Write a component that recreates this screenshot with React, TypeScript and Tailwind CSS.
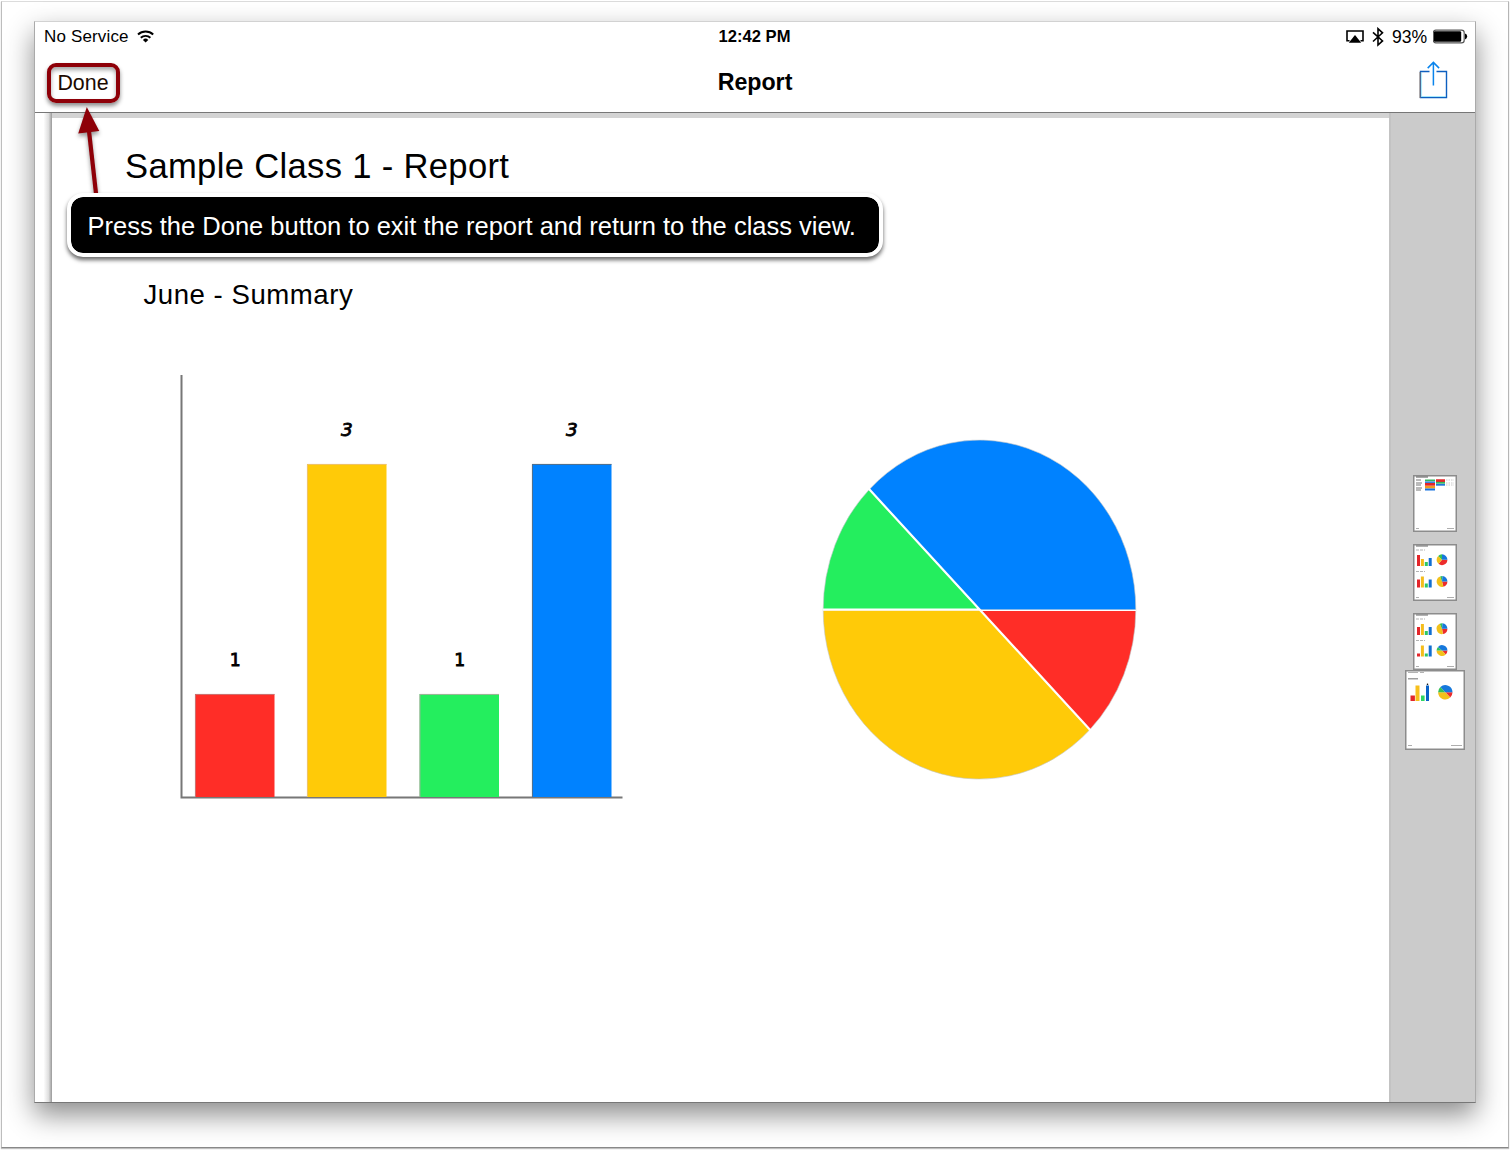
const RED = "#ff2d27";
const YELLOW = "#ffca08";
const GREEN = "#24ee5e";
const BLUE = "#0082ff";

const bars = [
    {x: 15, top: 320, value: 1, color: RED, edge: "#b98a8a"},
    {x: 127, top: 90, value: 3, color: YELLOW, edge: "#e8c08a"},
    {x: 239.5, top: 320, value: 1, color: GREEN, edge: "#c7a2ac"},
    {x: 352, top: 90, value: 3, color: BLUE, edge: "#6f6a66"},
];

const StatusBar = () => (
    <div className="grid h-[30px] grid-cols-3 pt-[5px] text-[17px] leading-[20px]">
        <div className="flex gap-[8px] pl-[9px]">
            <span className="tracking-[0.15px]">No Service</span>
            <svg width="18" height="14" viewBox="0 0 18 14" className="mt-[3px]" aria-hidden="true">
                <path d="M1 4.4A11.2 11.2 0 0 1 16.2 4.4" fill="none" stroke="#000" strokeWidth="2"/>
                <path d="M3.8 7.8A7 7 0 0 1 13.4 7.8" fill="none" stroke="#000" strokeWidth="1.9"/>
                <path d="M8.6 12.6L5.9 9.9A3.8 3.8 0 0 1 11.3 9.9Z"/>
            </svg>
        </div>
        <div className="-ml-px text-center text-[16.6px] font-bold">12:42 PM</div>
        <div className="flex justify-end pr-[7px]">
            <svg width="18" height="14" viewBox="0 0 18 14" className="mt-[3px]" aria-hidden="true">
                <path d="M3.5 10.7H1V1H17V10.7H14.5" fill="none" stroke="#000" strokeWidth="1.6"/>
                <path d="M9 5L15.2 12.8H2.8Z"/>
            </svg>
            <svg width="12" height="20" viewBox="0 0 12 20" className="ml-[8px]" aria-hidden="true">
                <path d="M1 5.4L10.5 13.9L6 18V1.7L10.5 5.8L1 14.5" fill="none" stroke="#000" strokeWidth="1.6"/>
            </svg>
            <span className="ml-[8px] w-[36px] text-[17.6px]">93%</span>
            <svg width="35" height="15" viewBox="0 0 35 15" className="ml-[5px] mt-[2px]" aria-hidden="true">
                <rect x="0.2" y="1.2" width="31" height="12.6" rx="2.6" fill="#fff" stroke="#555" strokeWidth="1.2"/>
                <rect x="0.8" y="2.2" width="27.4" height="10.6" rx="1.2"/>
                <path d="M32 4.6Q34.2 5.2 34.2 7.5T32 10.4Z"/>
            </svg>
        </div>
    </div>
);

const NavBar = () => (
    <div className="grid h-[60px] grid-cols-3 items-start">
        <div className="pl-[12px] pt-[11px]">
            <button
                className="flex h-[40px] w-[73px] items-center justify-center rounded-[9px] border-4 border-[#8e0008] text-[21.4px] leading-[24px] text-[#1c0a00] shadow-[0_3px_4px_rgba(0,0,0,0.45),inset_0_3px_4px_rgba(0,0,0,0.35)]">
                <span className="-mt-px -ml-px">Done</span>
            </button>
        </div>
        <h1 className="pt-[18px] text-center text-[23.2px] leading-[24px] font-bold">Report</h1>
        <div className="flex justify-end pr-[27px] pt-[9px]">
            <svg width="29" height="40" viewBox="0 0 29 40" fill="none" aria-label="Share">
                <path d="M10.5 10.5H1.5V36.5H27.5V10.5H17.5" stroke="#0d5fc0" strokeWidth="1.4"/>
                <path d="M2.6 11.6V35.5H26.4" stroke="#9cecff" strokeWidth="0.8"/>
                <path d="M1 11V37" stroke="#8b7466" strokeWidth="1"/>
                <path d="M14.4 24.5V1.5M8.7 7.1L14.4 1.4L20.1 7.1" stroke="#0a84ec" strokeWidth="1.5"/>
            </svg>
        </div>
    </div>
);

const BarChart = () => (
    <svg width="444" height="426" viewBox="0 0 444 426">
        <path d="M1.5 1V423.5H442.5" fill="none" stroke="#777" strokeWidth="2"/>
        {bars.map((bar) => (
            <g key={bar.x}>
                <rect x={bar.x} y={bar.top} width="79.5" height={423 - bar.top} fill={bar.color}/>
                <path d={`M${bar.x + 0.4} 423V${bar.top + 0.4}H${bar.x + 79.5}`} fill="none" stroke={bar.edge}
                      strokeWidth="0.8"/>
                <text
                    x={bar.x + 40}
                    y={bar.top - 28}
                    textAnchor="middle"
                    className={bar.value === 3
                        ? "font-['DejaVu_Sans'] text-[18.5px] italic stroke-black stroke-[0.8px]"
                        : "font-['DejaVu_Sans_Mono'] text-[18px] stroke-black stroke-[0.8px]"}
                >
                    {bar.value}
                </text>
            </g>
        ))}
    </svg>
);

const PieChart = () => (
    <svg width="316" height="344" viewBox="0 0 316 344">
        <g stroke="#bfc4c8" strokeWidth="0.6">
            <path d="M157.5 172L47.3 51.4A156.3 169.5 0 0 1 313.8 172Z" fill={BLUE}/>
            <path d="M157.5 172H1.2A156.3 169.5 0 0 1 47.3 51.4Z" fill={GREEN}/>
            <path d="M157.5 172H313.8A156.3 169.5 0 0 1 267.9 291.6Z" fill={RED}/>
            <path d="M157.5 172L267.9 291.6A156.3 169.3 0 0 1 1.2 172Z" fill={YELLOW}/>
        </g>
        <path d="M1 171.6H157.5M46.6 50.6L268.4 292.2" stroke="#fff" strokeWidth="2.2"/>
        <path d="M157.5 172.4H314" stroke="#fff" strokeWidth="1.4"/>
    </svg>
);

const MiniBars = ({x, y, heights}) => (
    <g>
        {heights.map((h, i) => (
            <rect key={i} x={x + i * 3.9} y={y - h} width="3" height={h} fill={["#e3262a", "#f4bd1c", "#2fc763", "#116fd2"][i]}/>
        ))}
    </g>
);

// Slice angles are in degrees, clockwise from the right
const MiniPie = ({x, y, r, cuts}) => (
    <g>
        {cuts.map((from, i) => {
            const to = i === cuts.length - 1 ? 360 : cuts[i + 1];
            const point = (deg) => `${x + r * Math.cos(deg * Math.PI / 180)} ${y + r * Math.sin(deg * Math.PI / 180)}`;
            return (
                <path
                    key={i}
                    d={`M${x} ${y}L${point(from)}A${r} ${r} 0 ${to - from > 180 ? 1 : 0} 1 ${point(to)}Z`}
                    fill={["#ec2c2c", "#f2c11a", "#32c058", "#1678dc"][i]}
                />
            );
        })}
    </g>
);

const TableThumb = () => (
    <svg width="44" height="57" viewBox="0 0 44 57">
        <rect x="0.75" y="0.75" width="42.5" height="55.5" fill="#fff" stroke="#8c8c8c" strokeWidth="1.5"/>
        <path d="M3 2H15" stroke="#555" strokeWidth="1"/>
        <path d="M3 5H8M3 8H9M3 10H8M3 13H9M3 15H8" stroke="#777" strokeWidth="1"/>
        <path d="M12 5.4H22" stroke="#36b65c" strokeWidth="1.8"/>
        <path d="M12 7.2H22" stroke="#2377d8" strokeWidth="1.4"/>
        <path d="M12 9.4H22M23 5.6H32" stroke="#e3262a" strokeWidth="2.6"/>
        <path d="M23 7.8H32" stroke="#36b65c" strokeWidth="1.8"/>
        <path d="M23 9.8H32" stroke="#2377d8" strokeWidth="1.8"/>
        <path d="M12 12.2H22" stroke="#f39a20" strokeWidth="2.6"/>
        <path d="M12 14.5H22" stroke="#1672e0" strokeWidth="2"/>
        <path d="M33 5H41M33 8H41M33 10H41" stroke="#bbb" strokeWidth="0.8" strokeDasharray="1.5 1"/>
        <path d="M3 53.5H6M34 53.5H41" stroke="#999" strokeWidth="0.8"/>
    </svg>
);

const ChartThumb = ({first, second, firstCuts, secondCuts}) => (
    <svg width="44" height="57" viewBox="0 0 44 57">
        <rect x="0.75" y="0.75" width="42.5" height="55.5" fill="#fff" stroke="#8c8c8c" strokeWidth="1.5"/>
        <path d="M3 2H15" stroke="#666" strokeWidth="1"/>
        <path d="M3 6H12M3 27.5H12" stroke="#aaa" strokeWidth="0.9" strokeDasharray="3 1"/>
        <MiniBars x={4} y={22} heights={first}/>
        <MiniPie x={29} y={15.7} r={5.4} cuts={firstCuts}/>
        <MiniBars x={4} y={43.5} heights={second}/>
        <MiniPie x={29} y={37.5} r={5.4} cuts={secondCuts}/>
        <path d="M3 53.5H6M34 53.5H41" stroke="#999" strokeWidth="0.8"/>
    </svg>
);

const CurrentThumb = () => (
    <svg width="60" height="80" viewBox="0 0 60 80">
        <rect x="0.75" y="0.75" width="58.5" height="78.5" fill="#fff" stroke="#8c8c8c" strokeWidth="1.5"/>
        <path d="M3 2.5H13M15 2.5H19" stroke="#aaa" strokeWidth="0.9"/>
        <path d="M3 8.8H13" stroke="#888" strokeWidth="1.2"/>
        <rect x="5.5" y="25.5" width="4.4" height="5.5" fill="#e3262a"/>
        <rect x="10.5" y="15.5" width="4" height="15.5" fill="#f7c01c"/>
        <rect x="16" y="25.5" width="3.6" height="5.5" fill="#2fd763"/>
        <rect x="21" y="15.5" width="3" height="15.5" fill="#0a62c8"/>
        <circle cx="22.5" cy="14.2" r="0.8"/>
        <MiniPie x={40.3} y={22.3} r={7.2} cuts={[0, 47, 180, 227]}/>
        <path d="M3 75.5H7M46 75.5H57" stroke="#999" strokeWidth="0.8"/>
    </svg>
);

const PageRail = () => (
    <div
        className="flex w-[86px] flex-col items-center border-l-2 border-[#c3c3c3] bg-[#cbcbcb] pt-[362px] pl-[4px]">
        <TableThumb/>
        <div className="mt-[12px]">
            <ChartThumb first={[11, 7, 4, 8]} second={[8, 11, 4, 8]} firstCuts={[0, 130, 225, 270]}
                        secondCuts={[0, 75, 250, 275]}/>
        </div>
        <div className="mt-[12px]">
            <ChartThumb first={[8, 11, 4, 8]} second={[3, 11, 3, 11]} firstCuts={[0, 80, 245, 275]}
                        secondCuts={[0, 47, 180, 222]}/>
        </div>
        <CurrentThumb/>
    </div>
);

const Callout = () => (
    <>
        <svg width="36" height="96" viewBox="0 0 36 96"
             className="absolute top-[82px] left-[38px] drop-shadow-[0_3px_2px_rgba(0,0,0,0.4)]" aria-hidden="true">
            <path d="M16 27L23 89.5" stroke="#8e0008" strokeWidth="4.2"/>
            <path d="M13.8 3L5.2 29.5L26.3 27Z" fill="#8e0008"/>
        </svg>
        <div
            className="absolute top-[171px] left-[31.5px] flex h-[64px] w-[816px] items-center rounded-[16px] border-4 border-white bg-black bg-clip-padding pt-[2px] pl-[17px] text-[25.5px] leading-[30px] whitespace-nowrap text-white shadow-[0_3px_4px_rgba(0,0,0,0.6)]">
            Press the Done button to exit the report and return to the class view.
        </div>
    </>
);

export default function App() {
    return (
        <div
            className="h-[1150px] w-[1510px] bg-white pt-px pl-px font-['Liberation_Sans',Arial,sans-serif] text-black">
            <div
                className="h-[1147px] w-[1508px] border border-t-[#dcdcdc] border-r-[#b5b5b5] border-b-[#888] border-l-[#bdbdbd] pt-[19px] pl-[32px] shadow-[0_1px_1px_rgba(0,0,0,0.25)]">
                <div
                    className="relative flex h-[1082px] w-[1442px] flex-col border border-t-[#d2d2d2] border-r-[#aaa] border-b-[#777] border-l-[#aaa] bg-white shadow-[0_12px_26px_rgba(0,0,0,0.45)]">
                    <StatusBar/>
                    <NavBar/>

                    {/* Report page and thumbnail rail */}
                    <div className="flex flex-1 border-t border-[#777]">
                        <div
                            className="w-[17px] bg-linear-to-r from-white from-50% via-[#dedede] via-80% to-[#999]"/>
                        <div className="flex-1 border-t-5 border-[#d3d3d3]">
                            <h2 className="mt-[31px] ml-[73px] h-[34px] text-[34.6px] leading-[34px] tracking-[0.33px]">
                                Sample Class 1 - Report
                            </h2>
                            <h3 className="mt-[98px] ml-[91.5px] h-[28px] text-[27.6px] leading-[28px] tracking-[0.52px]">
                                June - Summary
                            </h3>
                            <div className="mt-[65px] flex items-start pl-[128px]">
                                <BarChart/>
                                <div className="mt-[64px] ml-[198px]">
                                    <PieChart/>
                                </div>
                            </div>
                        </div>
                        <PageRail/>
                    </div>

                    <Callout/>
                </div>
            </div>
        </div>
    );
}
